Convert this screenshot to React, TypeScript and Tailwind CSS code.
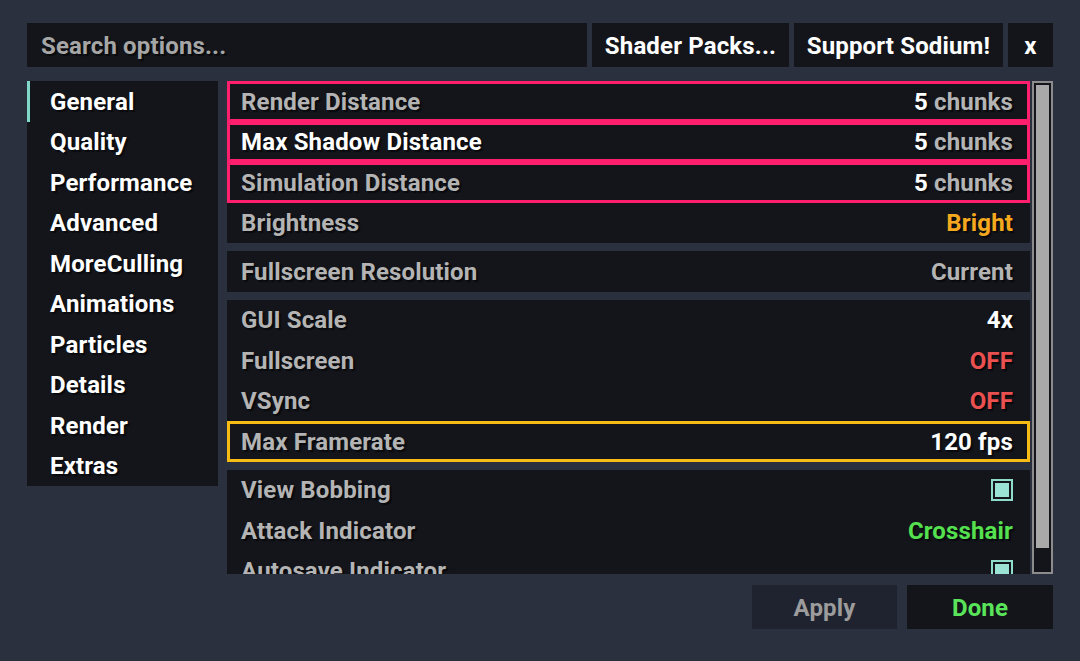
import { ReactNode } from 'react';

type Row = {
  label: string;
  value: ReactNode;
  labelClass?: string;
  outline?: 'pink' | 'yellow';
};

const shadow = '[text-shadow:2px_2px_1px_rgba(0,0,0,0.55)]';

const chunks = (
  <span>
    <span className="text-white">5</span> <span className="text-[#b4b4b4]">chunks</span>
  </span>
);

const Check = () => (
  <span className="inline-flex w-[22px] h-[22px] border-2 border-[#8fdccd] p-[2px] bg-[#13151b]">
    <span className="flex-1 bg-[#9be3d5]" />
  </span>
);

const groups: Row[][] = [
  [
    { label: 'Render Distance', value: chunks, outline: 'pink' },
    { label: 'Max Shadow Distance', value: chunks, outline: 'pink', labelClass: 'text-white' },
    { label: 'Simulation Distance', value: chunks, outline: 'pink' },
    { label: 'Brightness', value: <span className="text-[#f5a91e]">Bright</span> },
  ],
  [{ label: 'Fullscreen Resolution', value: <span className="text-[#b4b4b4]">Current</span> }],
  [
    { label: 'GUI Scale', value: <span className="text-white">4x</span> },
    { label: 'Fullscreen', value: <span className="text-[#ea5050]">OFF</span> },
    { label: 'VSync', value: <span className="text-[#ea5050]">OFF</span> },
    { label: 'Max Framerate', value: <span className="text-white">120 fps</span>, outline: 'yellow' },
  ],
  [
    { label: 'View Bobbing', value: <Check /> },
    { label: 'Attack Indicator', value: <span className="text-[#55e04f]">Crosshair</span> },
    { label: 'Autosave Indicator', value: <Check /> },
  ],
];

const categories = [
  'General',
  'Quality',
  'Performance',
  'Advanced',
  'MoreCulling',
  'Animations',
  'Particles',
  'Details',
  'Render',
  'Extras',
];

function OptionRow({ row }: { row: Row }) {
  const border =
    row.outline === 'pink'
      ? 'border-[3px] border-[#ff1f6d]'
      : row.outline === 'yellow'
        ? 'border-[3px] border-[#f7bb14]'
        : 'border-[3px] border-transparent';
  return (
    <div className={`h-[40.5px] flex items-center justify-between pl-[11px] pr-[14px] pt-[1px] ${border}`}>
      <span className={`${row.labelClass ?? 'text-[#b4b4b4]'}`}>{row.label}</span>
      <span className="flex items-center">{row.value}</span>
    </div>
  );
}

export default function App() {
  return (
    <div
      className={`w-[1080px] h-[661px] bg-[#2b303f] flex flex-col px-[27px] pt-[23px] text-[24px] font-bold tracking-[0.15px] ${shadow}`}
      style={{ fontFamily: 'Roboto, "Noto Sans", sans-serif' }}
    >
      {/* Top bar */}
      <div className="flex gap-[5px] h-[44px]">
        <div className="w-[560px] bg-[#13151b] flex items-center pl-[14px] pt-[1px] text-[#a6a6a6]">
          Search options...
        </div>
        <button className="w-[197px] bg-[#13151b] text-white pt-[1px]">Shader Packs...</button>
        <button className="w-[209px] bg-[#13151b] text-white pt-[1px]">Support Sodium!</button>
        <button className="w-[45px] bg-[#13151b] text-white pt-[1px]">x</button>
      </div>

      {/* Main */}
      <div className="flex mt-[14px] h-[493px]">
        <div className="w-[191px] h-[405px] bg-[#13151b] flex flex-col">
          {categories.map((c, i) => (
            <div
              key={c}
              className={`h-[40.5px] flex items-center text-white pt-[1px] ${
                i === 0 ? 'border-l-[3px] border-[#7fd8c8] pl-[20px]' : 'pl-[23px]'
              }`}
            >
              {c}
            </div>
          ))}
        </div>

        <div className="ml-[9px] w-[803px] overflow-hidden flex flex-col gap-[8px]">
          {groups.map((g, gi) => (
            <div key={gi} className="bg-[#13151b] flex flex-col shrink-0">
              {g.map((r) => (
                <OptionRow key={r.label} row={r} />
              ))}
            </div>
          ))}
        </div>

        <div className="ml-[2px] w-[21px] border-2 border-[#8c8c8c] bg-[#13151b] p-[2px] flex flex-col">
          <div className="h-[463px] bg-[#a9a9a9]" />
        </div>
      </div>

      {/* Bottom buttons */}
      <div className="flex justify-end gap-[10px] mt-[11px]">
        <button className="w-[145px] h-[44px] bg-[#1f2330] text-[#9c9c9c] pt-[1px]">Apply</button>
        <button className="w-[146px] h-[44px] bg-[#13151b] text-[#5ae45a] pt-[1px]">Done</button>
      </div>
    </div>
  );
}
